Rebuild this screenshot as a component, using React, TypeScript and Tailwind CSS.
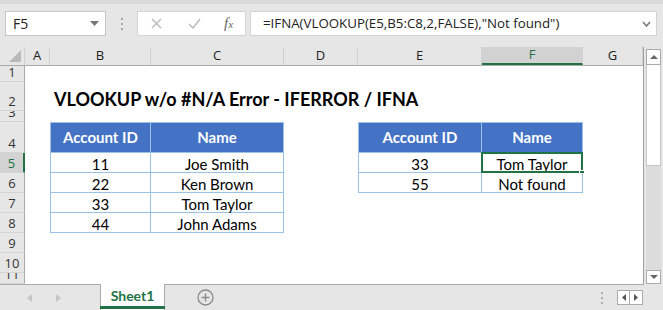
import React from "react";

const cellFont = { fontFamily: "Lato, 'Open Sans', sans-serif" };
const uiFont = { fontFamily: "'Open Sans', 'Noto Sans', sans-serif" };

const cols = [
  { k: "A", w: "w-[25px]" },
  { k: "B", w: "w-[101px]" },
  { k: "C", w: "w-[133px]" },
  { k: "D", w: "w-[74px]" },
  { k: "E", w: "w-[124px]" },
  { k: "F", w: "w-[101px]" },
  { k: "G", w: "w-[60px]" },
];

const rows = [
  { n: "1", h: "h-[16px]" },
  { n: "2", h: "h-[29px]" },
  { n: "3", h: "h-[11px]" },
  { n: "4", h: "h-[31px]" },
  { n: "5", h: "h-[20px]" },
  { n: "6", h: "h-[20px]" },
  { n: "7", h: "h-[20px]" },
  { n: "8", h: "h-[20px]" },
  { n: "9", h: "h-[20px]" },
  { n: "10", h: "h-[20px]" },
  { n: "11", h: "h-[11px]" },
];

const left: Record<number, [string, string]> = {
  4: ["Account ID", "Name"],
  5: ["11", "Joe Smith"],
  6: ["22", "Ken Brown"],
  7: ["33", "Tom Taylor"],
  8: ["44", "John Adams"],
};
const right: Record<number, [string, string]> = {
  4: ["Account ID", "Name"],
  5: ["33", "Tom Taylor"],
  6: ["55", "Not found"],
};

function TableCell({
  text,
  header,
  first,
  top,
  w,
}: {
  text: string;
  header: boolean;
  first: boolean;
  top: boolean;
  w: string;
}) {
  return (
    <div
      className={`${w} h-full flex items-center justify-center border-r border-b border-[#9bc2e6] ${
        first ? "border-l" : ""
      } ${top ? "border-t" : ""} ${
        header ? "bg-[#4472c4] text-white font-bold" : "bg-white text-black pt-[3px]"
      } text-[15px]`}
    >
      {text}
    </div>
  );
}

function Row({ n, h }: { n: number; h: string }) {
  const sel = n === 5;
  return (
    <div className={`flex ${h}`}>
      <div
        className={`w-[25px] h-full shrink-0 flex items-end justify-center overflow-hidden border-b border-[#d4d4d4] ${
          sel
            ? "bg-[#d2d2d2] text-[#217346] border-r-2 border-r-[#217346]"
            : "bg-[#e6e6e6] text-[#333] border-r border-r-[#ababab]"
        } text-[13px] leading-[17px]`}
        style={uiFont}
      >
        {n}
      </div>
      <div className="flex-1 flex bg-white relative" style={cellFont}>
        <div className="w-[25px] shrink-0" />
        {n === 2 ? (
          <div className="pl-[4px] pb-[3px] flex items-end text-[18px] font-bold text-black whitespace-nowrap leading-none">
            VLOOKUP w/o #N/A Error - IFERROR / IFNA
          </div>
        ) : (
          <>
            {left[n] ? (
              <>
                <TableCell text={left[n][0]} header={n === 4} first top={n === 4} w="w-[101px]" />
                <TableCell text={left[n][1]} header={n === 4} first={false} top={n === 4} w="w-[133px]" />
              </>
            ) : (
              <div className="w-[234px] shrink-0" />
            )}
            <div className="w-[74px] shrink-0" />
            {right[n] ? (
              <>
                <TableCell text={right[n][0]} header={n === 4} first top={n === 4} w="w-[124px]" />
                <div className="relative">
                  <TableCell text={right[n][1]} header={n === 4} first={false} top={n === 4} w="w-[101px]" />
                  {sel && (
                    <>
                      <div className="absolute left-[-1px] top-[-1px] w-[102px] h-[21px] border-2 border-[#217346]" />
                      <div className="absolute left-[97px] top-[17px] w-[6px] h-[6px] bg-[#217346] border border-white" />
                    </>
                  )}
                </div>
              </>
            ) : null}
          </>
        )}
      </div>
    </div>
  );
}

export default function App() {
  return (
    <div className="w-[663px] h-[310px] bg-[#e6e6e6] flex flex-col overflow-hidden">
      {/* top */}
      <div className="h-[4px] bg-[#d9d9d9]" />
      <div className="h-[43px] flex items-start pt-[7px]">
        <div
          className="ml-[5px] w-[101px] h-[25px] bg-white border border-[#c6c6c6] flex items-center justify-between pl-[7px] pr-[6px] text-[14px] text-[#222]"
          style={uiFont}
        >
          <span>F5</span>
          <svg width="9" height="5" viewBox="0 0 9 5">
            <path d="M0 0 L9 0 L4.5 5 Z" fill="#777" />
          </svg>
        </div>
        <div className="w-[31px] h-[25px] flex flex-col items-center justify-center gap-[3px]">
          <div className="w-[2px] h-[2px] bg-[#a6a6a6]" />
          <div className="w-[2px] h-[2px] bg-[#a6a6a6]" />
          <div className="w-[2px] h-[2px] bg-[#a6a6a6]" />
        </div>
        <div className="w-[109px] h-[25px] bg-white border border-[#d4d4d4] flex items-center">
          <svg className="ml-[13px]" width="11" height="11" viewBox="0 0 11 11">
            <path d="M1 1 L10 10 M10 1 L1 10" stroke="#bdbdbd" strokeWidth="1.5" />
          </svg>
          <svg className="ml-[26px]" width="13" height="11" viewBox="0 0 13 11">
            <path d="M1 6 L5 10 L12 1" stroke="#bdbdbd" strokeWidth="1.6" fill="none" />
          </svg>
          <span
            className="ml-[23px] text-[15px] italic text-[#666]"
            style={{ fontFamily: "'Liberation Serif', serif" }}
          >
            <span>f</span>
            <span className="text-[11px]">x</span>
          </span>
        </div>
        <div
          className="ml-[4px] w-[407px] h-[25px] bg-white border border-[#d4d4d4] flex items-center justify-between pl-[12px] pr-[5px] text-[13.3px] text-[#222]"
          style={uiFont}
        >
          <span className="whitespace-nowrap">=IFNA(VLOOKUP(E5,B5:C8,2,FALSE),"Not found")</span>
          <svg width="9" height="6" viewBox="0 0 9 6">
            <path d="M1 1 L4.5 5 L8 1" stroke="#777" strokeWidth="1.5" fill="none" />
          </svg>
        </div>
      </div>

      {/* grid area */}
      <div className="flex h-[237px]">
        <div className="w-[644px] flex flex-col border-r border-[#a0a0a0]">
          {/* column headers */}
          <div className="h-[19px] flex border-b border-[#ababab] bg-[#e6e6e6]" style={uiFont}>
            <div className="w-[25px] h-full relative border-r border-[#d0d0d0]">
              <svg className="absolute right-[3px] bottom-[3px]" width="12" height="12" viewBox="0 0 12 12">
                <path d="M12 0 L12 12 L0 12 Z" fill="#b8b8b8" />
              </svg>
            </div>
            {cols.map((c) => (
              <div
                key={c.k}
                className={`${c.w} h-full shrink-0 flex items-center justify-center text-[13px] border-r border-[#d0d0d0] ${
                  c.k === "F"
                    ? "bg-[#d2d2d2] text-[#217346] border-b-2 border-b-[#217346]"
                    : "text-[#222]"
                }`}
              >
                {c.k}
              </div>
            ))}
          </div>
          {rows.map((r, i) => (
            <Row key={r.n} n={i + 1} h={r.h} />
          ))}
        </div>
        {/* vertical scrollbar */}
        <div className="flex-1 flex flex-col pl-[2px] pr-[2px] pt-[2px]">
          <div className="h-[16px] bg-white border border-[#ababab] flex items-center justify-center">
            <svg width="8" height="4" viewBox="0 0 8 4">
              <path d="M0 4 L8 4 L4 0 Z" fill="#666" />
            </svg>
          </div>
          <div className="h-[101px] bg-white border border-t-0 border-[#c6c6c6]" />
          <div className="flex-1 bg-[#dcdcdc]" />
          <div className="h-[14px] bg-white border border-[#ababab] flex items-center justify-center">
            <svg width="8" height="4" viewBox="0 0 8 4">
              <path d="M0 0 L8 0 L4 4 Z" fill="#666" />
            </svg>
          </div>
        </div>
      </div>

      {/* bottom tab bar */}
      <div className="flex-1 flex items-stretch border-t border-[#ababab] w-[644px] relative">
        <div className="w-[100px] flex items-center">
          <svg className="ml-[27px]" width="5" height="8" viewBox="0 0 5 8">
            <path d="M5 0 L5 8 L0 4 Z" fill="#c6c6c6" />
          </svg>
          <svg className="ml-[24px]" width="5" height="8" viewBox="0 0 5 8">
            <path d="M0 0 L0 8 L5 4 Z" fill="#c6c6c6" />
          </svg>
        </div>
        <div className="w-[65px] -mt-px bg-white border-l border-r border-[#ababab] flex flex-col">
          <div
            className="flex-1 flex items-center justify-center text-[14px] font-bold text-[#217346]"
            style={cellFont}
          >
            Sheet1
          </div>
          <div className="h-[3px] bg-[#217346] -mx-px mb-[1px]" />
        </div>
        <div className="flex items-center ml-[32px]">
          <svg width="17" height="17" viewBox="0 0 17 17">
            <circle cx="8.5" cy="8.5" r="7.5" stroke="#8a8a8a" strokeWidth="1.3" fill="none" />
            <path d="M8.5 4.5 L8.5 12.5 M4.5 8.5 L12.5 8.5" stroke="#8a8a8a" strokeWidth="1.4" />
          </svg>
        </div>
        <div className="flex-1" />
        <div className="flex flex-col items-center justify-center gap-[3px] mr-[14px]">
          <div className="w-[2px] h-[2px] bg-[#b0b0b0]" />
          <div className="w-[2px] h-[2px] bg-[#b0b0b0]" />
          <div className="w-[2px] h-[2px] bg-[#b0b0b0]" />
        </div>
        <div className="flex items-center mr-[1px]">
          <div className="w-[13px] h-[15px] bg-white border border-[#ababab] flex items-center justify-center">
            <svg width="4" height="7" viewBox="0 0 4 7">
              <path d="M4 0 L4 7 L0 3.5 Z" fill="#555" />
            </svg>
          </div>
          <div className="w-[13px] h-[15px] bg-white border border-l-0 border-[#ababab] flex items-center justify-center">
            <svg width="4" height="7" viewBox="0 0 4 7">
              <path d="M0 0 L0 7 L4 3.5 Z" fill="#555" />
            </svg>
          </div>
        </div>
      </div>
    </div>
  );
}
